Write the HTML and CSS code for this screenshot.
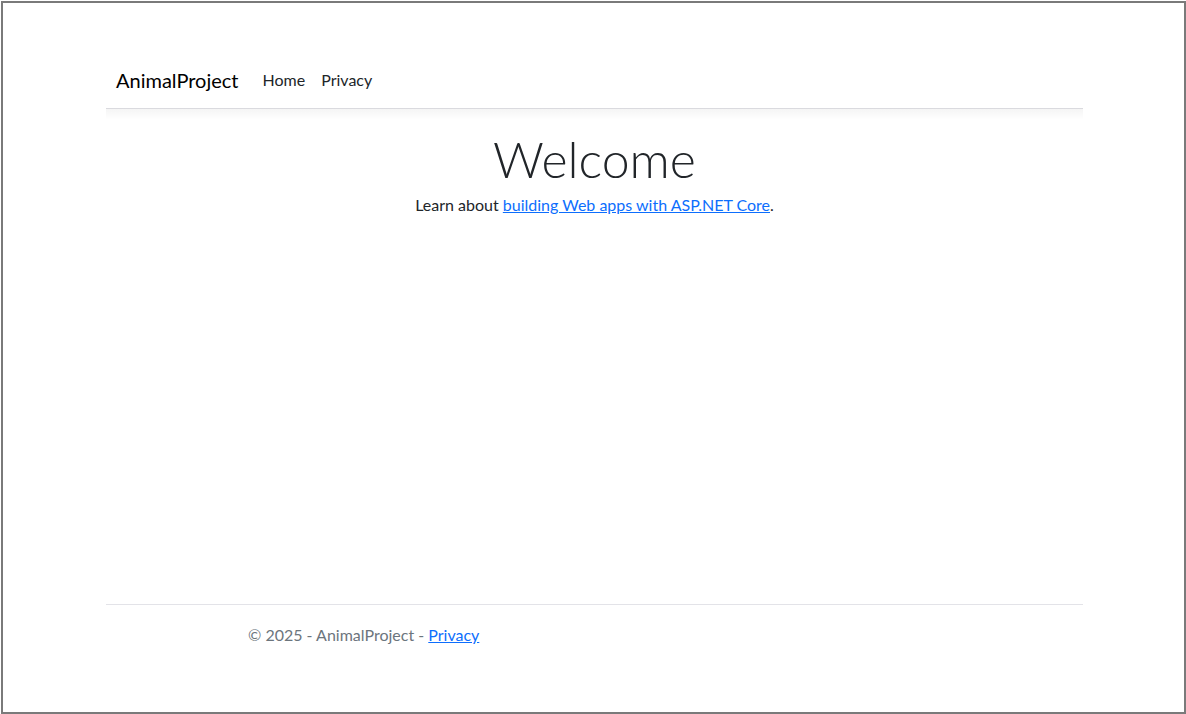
FILE: index.html
```html
<!DOCTYPE html>
<html>
<head>
<meta charset="utf-8">
<title>Home Page - AnimalProject</title>
<link rel="stylesheet" href="styles.css">
</head>
<body>
<div class="frame">
  <header class="header">
    <nav class="navbar">
      <a class="brand" href="#">AnimalProject</a>
      <ul class="nav">
        <li><a class="nav-link" href="#">Home</a></li>
        <li><a class="nav-link" href="#">Privacy</a></li>
      </ul>
    </nav>
  </header>
  <main class="main">
    <h1 class="display">Welcome</h1>
    <p class="lead">Learn about <a href="#">building Web apps with ASP.NET Core</a>.</p>
  </main>
  <footer class="footer">
    <div class="footer-inner">© 2025 - AnimalProject - <a href="#">Privacy</a></div>
  </footer>
</div>
</body>
</html>
```
FILE: styles.css
```css
html, body { margin: 0; padding: 0; background: #fff; }
body { font-family: Lato, "Noto Sans", sans-serif; font-size: 16px; color: #212529; }
a { color: #0d6efd; }

.frame {
  box-sizing: border-box;
  margin: 1px 0 0 1px;
  width: 1185px;
  height: 713px;
  border: 2px solid #7a7a7a;
  display: flex;
  flex-direction: column;
  padding-bottom: 47px;
}

.header { padding-top: 49px; }

.navbar {
  position: relative;
  box-sizing: border-box;
  width: 977px;
  margin-left: 103px;
  height: 57px;
  padding: 0 10px;
  display: flex;
  align-items: center;
  border-bottom: 1px solid #e3e3e8;
}
.navbar::after {
  content: "";
  position: absolute;
  left: 0;
  right: 0;
  top: 100%;
  height: 12px;
  background: linear-gradient(to bottom, rgba(0, 0, 0, 0.045), rgba(0, 0, 0, 0));
  pointer-events: none;
}

.brand {
  font-size: 20px;
  color: #000;
  text-decoration: none;
  margin-right: 16px;
  line-height: 30px;
}

.nav { list-style: none; margin: 0; padding: 0; display: flex; }
.nav-link {
  display: block;
  padding: 8px;
  color: #212529;
  text-decoration: none;
  line-height: 24px;
}

.main {
  width: 977px;
  margin-left: 103px;
  text-align: center;
  padding-top: 20px;
}

.display {
  margin: 0 0 4px;
  font-size: 50px;
  font-weight: 300;
  line-height: 1.2;
  color: #212529;
}

.lead { margin: 0; line-height: 24px; }

.footer {
  margin-top: auto;
  width: 977px;
  margin-left: 103px;
  border-top: 1px solid #e3e3e8;
  color: #6c757d;
  line-height: 60px;
}
.footer-inner { padding-left: 142px; }
```
